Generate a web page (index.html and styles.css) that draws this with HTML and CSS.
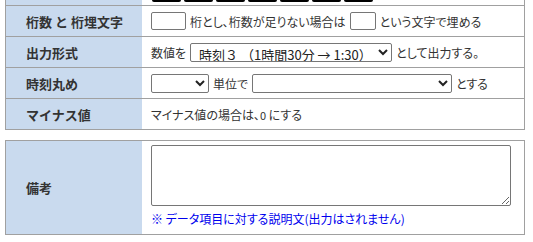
FILE: index.html
```html
<!DOCTYPE html>
<html lang="ja">
<head>
<meta charset="utf-8">
<link rel="stylesheet" href="styles.css">
</head>
<body>
<div class="table table-top">
  <div class="row row-partial">
    <div class="label"></div>
    <div class="value bars">
      <span class="bar"></span><span class="bar"></span><span class="bar"></span><span class="bar"></span><span class="bar"></span><span class="bar"></span><span class="bar"></span>
    </div>
  </div>
  <div class="row">
    <div class="label">桁数 と 桁埋文字</div>
    <div class="value">
      <input class="box box-digits" type="text">
      <span>桁とし、桁数が足りない場合は</span>
      <input class="box box-fill" type="text">
      <span>という文字で埋める</span>
    </div>
  </div>
  <div class="row">
    <div class="label">出力形式</div>
    <div class="value">
      <span>数値を</span>
      <select class="sel sel-format"><option>時刻３ （1時間30分 → 1:30）</option></select>
      <span>として出力する。</span>
    </div>
  </div>
  <div class="row">
    <div class="label">時刻丸め</div>
    <div class="value">
      <select class="sel sel-unit"><option></option></select>
      <span>単位で</span>
      <select class="sel sel-round"><option></option></select>
      <span>とする</span>
    </div>
  </div>
  <div class="row">
    <div class="label">マイナス値</div>
    <div class="value">
      <span>マイナス値の場合は、<span class="zero">0</span> にする</span>
    </div>
  </div>
</div>

<div class="table table-note">
  <div class="row row-note">
    <div class="label">備考</div>
    <div class="value value-note">
      <textarea class="memo"></textarea>
      <span class="hint">※ データ項目に対する説明文(出力はされません)</span>
    </div>
  </div>
</div>
</body>
</html>
```

FILE: styles.css
```css
* { box-sizing: border-box; }

body {
  margin: 0;
  font-family: "Noto Sans CJK JP", "Noto Sans", sans-serif;
  color: #333;
  background: #fff;
}

.table {
  margin-left: 5px;
  width: 520px;
  border: 1px solid #a0a0a0;
}

.table-top {
  border-top: none;
}

.table-note {
  margin-top: 10px;
}

.row {
  display: grid;
  grid-template-columns: 136px 1fr;
  height: 31px;
  border-top: 1px solid #a0a0a0;
}

.row-partial {
  height: 5px;
  border-top: none;
  overflow: hidden;
}

.row-note {
  height: 93px;
  border-top: none;
}

.label {
  background: #c9daee;
  display: flex;
  align-items: center;
  padding-left: 20px;
  font-size: 13px;
  font-weight: bold;
  color: #333;
}

.value {
  display: flex;
  align-items: center;
  gap: 4px;
  padding-left: 9px;
  font-size: 12px;
  font-feature-settings: "palt";
  white-space: nowrap;
}

.bars {
  align-items: flex-start;
  gap: 3px;
  padding-left: 10px;
}

.bar {
  display: block;
  width: 29px;
  height: 2px;
  background: #000;
  border-radius: 0 0 2px 2px;
}

.box {
  height: 18px;
  padding: 0;
  border: 1px solid #767676;
  border-radius: 2px;
  background: #fff;
}

.box-digits { width: 35px; }
.box-fill { width: 26px; }

.sel {
  height: 19px;
  font-family: "Noto Sans CJK JP", sans-serif;
  font-size: 13px;
  color: #222;
  border: 1px solid #767676;
  border-radius: 2px;
  background: #fff;
  padding: 0 0 0 4px;
}

.sel-format { width: 202px; }
.sel-unit { width: 58px; }
.sel-round { width: 200px; }

.zero {
  font-size: 11px;
}

.value-note {
  flex-direction: column;
  align-items: flex-start;
  justify-content: flex-start;
  gap: 4px;
  padding-top: 4px;
}

.memo {
  width: 360px;
  height: 61px;
  border: 1px solid #767676;
  border-radius: 2px;
  resize: vertical;
  margin: 0;
  display: block;
}

.hint {
  color: #0000ee;
  font-size: 12px;
  line-height: 18px;
}
```
